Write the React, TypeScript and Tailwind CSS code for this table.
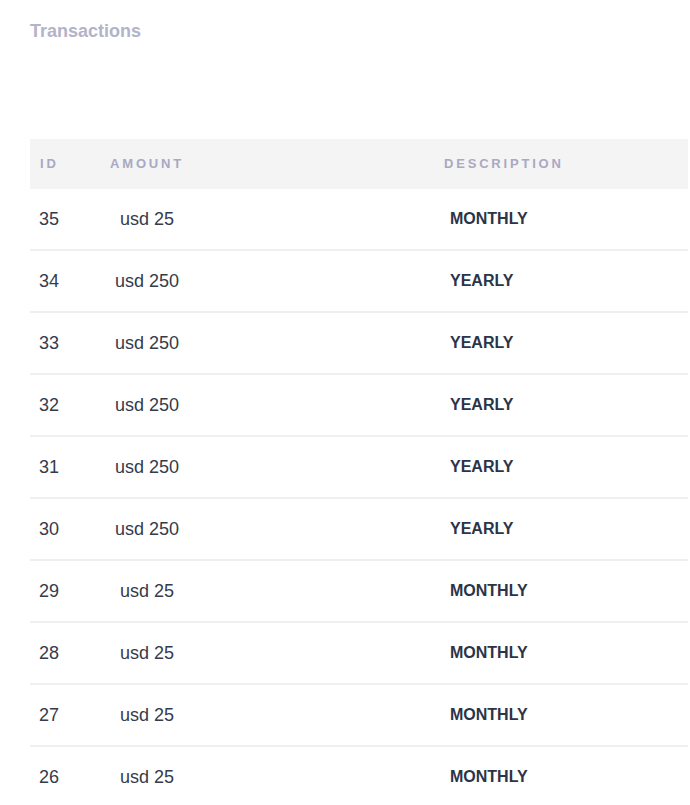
const rows = [
  { id: 35, amount: "usd 25", desc: "MONTHLY" },
  { id: 34, amount: "usd 250", desc: "YEARLY" },
  { id: 33, amount: "usd 250", desc: "YEARLY" },
  { id: 32, amount: "usd 250", desc: "YEARLY" },
  { id: 31, amount: "usd 250", desc: "YEARLY" },
  { id: 30, amount: "usd 250", desc: "YEARLY" },
  { id: 29, amount: "usd 25", desc: "MONTHLY" },
  { id: 28, amount: "usd 25", desc: "MONTHLY" },
  { id: 27, amount: "usd 25", desc: "MONTHLY" },
  { id: 26, amount: "usd 25", desc: "MONTHLY" },
];

export default function App() {
  return (
    <div className="min-h-[805px] bg-white pl-[30px] pr-[2px] pt-[21px] font-['Liberation_Sans',Arial,sans-serif]">
      <h2 className="text-[18px] font-bold leading-5 text-[#b3b3c9]">Transactions</h2>

      <div className="mt-[98px]">
        <div className="grid h-[50px] grid-cols-[70px_94px_1fr] items-center bg-[#f4f4f5] text-[13px] font-bold tracking-[2.8px] text-[#a9a9c1]">
          <div className="pl-[10px]">ID</div>
          <div className="text-center">AMOUNT</div>
          <div className="pl-[250px]">DESCRIPTION</div>
        </div>

        {rows.map((r) => (
          <div
            key={r.id}
            className="grid h-[62px] grid-cols-[70px_94px_1fr] items-center border-b-2 border-[#efefef] text-[#353b4a]"
          >
            <div className="pl-[9px] text-[18px]">{r.id}</div>
            <div className="text-center text-[18px]">{r.amount}</div>
            <div className="pl-[256px] text-[16px] font-bold text-[#2b3448]">{r.desc}</div>
          </div>
        ))}
      </div>
    </div>
  );
}
